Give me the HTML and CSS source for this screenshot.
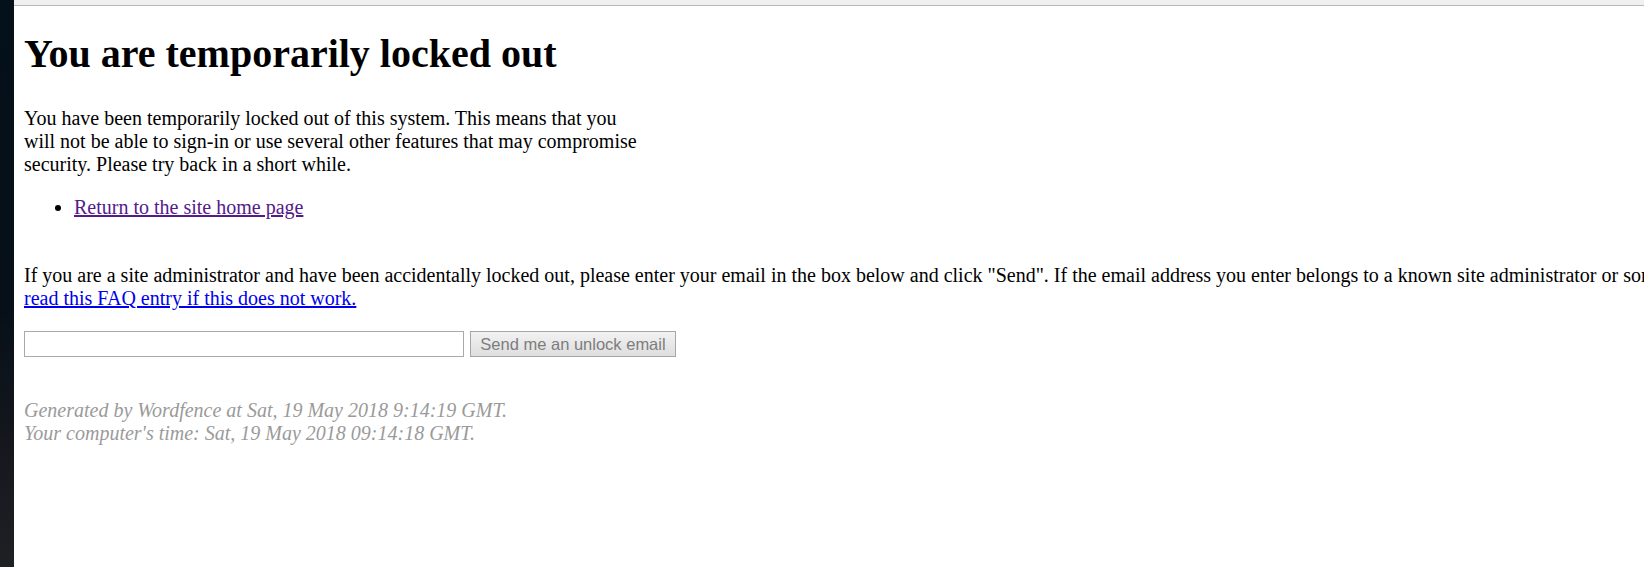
FILE: index.html
```html
<!DOCTYPE html>
<html lang="en">
<head>
<meta charset="utf-8">
<title>You are temporarily locked out</title>
<link rel="stylesheet" href="styles.css">
</head>
<body>
<div class="desktop-edge"></div>
<div class="window">
  <div class="window-top"></div>
  <main class="page">
    <h1 class="title">You are temporarily locked out</h1>
    <p class="intro">You have been temporarily locked out of this system. This means that you will not be able to sign-in or use several other features that may compromise security. Please try back in a short while.</p>
    <ul class="links">
      <li><a class="visited-link" href="#">Return to the site home page</a></li>
    </ul>
    <p class="admin-note">If you are a site administrator and have been accidentally locked out, please enter your email in the box below and click "Send". If the email address you enter belongs to a known site administrator or someone set to receive Wordfence alerts, we will send you an email to help you regain access. Please<br><a class="faq-link" href="#">read this FAQ entry if this does not work.</a></p>
    <form class="unlock-form">
      <input class="email-input" type="text" aria-label="Email">
      <button class="unlock-button" type="button" disabled>Send me an unlock email</button>
    </form>
    <p class="generated">Generated by Wordfence at Sat, 19 May 2018 9:14:19 GMT.<br>Your computer's time: Sat, 19 May 2018 09:14:18 GMT.</p>
  </main>
</div>
</body>
</html>
```

FILE: styles.css
```css
html, body {
  margin: 0;
  padding: 0;
  height: 567px;
  overflow: hidden;
}

body {
  display: flex;
  background: #060e14;
}

.desktop-edge {
  width: 14px;
  flex: none;
  background: linear-gradient(to bottom, #04101a 0%, #071018 55%, #15181d 80%, #1e2024 100%);
}

.window {
  flex: 1;
  min-width: 0;
  display: flex;
  flex-direction: column;
  background: #ffffff;
  overflow: hidden;
}

.window-top {
  height: 5px;
  flex: none;
  background: #f0f0f0;
  border-bottom: 1px solid #b9b9b9;
}

.page {
  padding: 26px 10px 0;
  font-family: "Liberation Serif", "Times New Roman", serif;
  font-size: 20px;
  line-height: 23px;
  color: #000;
}

.title {
  margin: 0 0 31px;
  font-size: 40px;
  line-height: 44px;
  font-weight: bold;
}

.intro {
  width: 622px;
  margin: 0 0 20px;
}

.links {
  margin: 0 0 45px;
  padding-left: 50px;
}

.visited-link {
  color: #551a8b;
}

.admin-note {
  margin: 0 0 21px;
  white-space: nowrap;
}

.faq-link {
  color: #0000ee;
}

.unlock-form {
  display: flex;
  gap: 6px;
  margin: 0;
}

.email-input {
  box-sizing: border-box;
  width: 440px;
  height: 26px;
  margin: 0;
  border: 1px solid #a9a9a9;
  background: #fff;
  padding: 2px 3px;
}

.unlock-button {
  box-sizing: border-box;
  width: 206px;
  height: 26px;
  margin: 0;
  padding: 0 9px;
  border: 1px solid #a6a6a6;
  border-radius: 0;
  background: linear-gradient(to bottom, #f2f2f2, #dedede);
  font-family: "Liberation Sans", Arial, sans-serif;
  font-size: 16.5px;
  color: #7d7d7d;
}

.generated {
  margin: 42px 0 0;
  font-style: italic;
  color: #9a9a9a;
}
```
